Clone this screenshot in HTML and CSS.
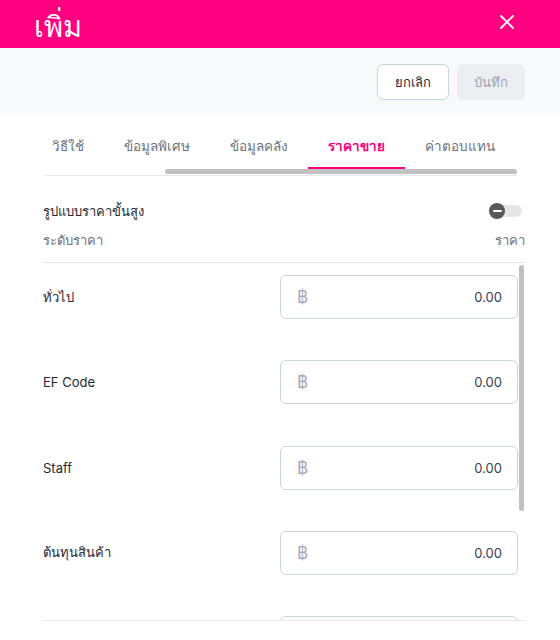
FILE: index.html
```html
<!DOCTYPE html>
<html lang="th">
<head>
<meta charset="utf-8">
<title>เพิ่ม</title>
<link rel="stylesheet" href="styles.css">
</head>
<body>
<div class="modal">
  <header class="header">
    <h1 class="title">เพิ่ม</h1>
    <button class="close" aria-label="close">
      <svg width="14" height="14" viewBox="0 0 14 14"><path d="M1 1 L13 13 M13 1 L1 13" stroke="#fff" stroke-width="1.8" stroke-linecap="round"/></svg>
    </button>
  </header>
  <div class="toolbar">
    <button class="btn btn-cancel">ยกเลิก</button>
    <button class="btn btn-save">บันทึก</button>
  </div>
  <nav class="tabs-wrap">
    <div class="tabs-scroll">
      <div class="tabs">
        <span class="tab">ข้อมูลทั่วไป</span>
        <span class="tab">รูปภาพ</span>
        <span class="tab">วิธีใช้</span>
        <span class="tab">ข้อมูลพิเศษ</span>
        <span class="tab">ข้อมูลคลัง</span>
        <span class="tab active">ราคาขาย</span>
        <span class="tab">ค่าตอบแทน</span>
      </div>
    </div>
    <div class="hscroll"><div class="hthumb"></div></div>
  </nav>
  <section class="content">
    <div class="adv-row">
      <span class="adv-label">รูปแบบราคาขั้นสูง</span>
      <span class="toggle"><span class="knob"></span></span>
    </div>
    <div class="head-row">
      <span>ระดับราคา</span>
      <span>ราคา</span>
    </div>
    <div class="list-area">
      <div class="list">
        <div class="row"><span class="row-label">ทั่วไป</span><div class="price-input"><span class="baht">฿</span><span class="val">0.00</span></div></div>
        <div class="row"><span class="row-label">EF Code</span><div class="price-input"><span class="baht">฿</span><span class="val">0.00</span></div></div>
        <div class="row"><span class="row-label">Staff</span><div class="price-input"><span class="baht">฿</span><span class="val">0.00</span></div></div>
        <div class="row"><span class="row-label">ต้นทุนสินค้า</span><div class="price-input"><span class="baht">฿</span><span class="val">0.00</span></div></div>
        <div class="row"><span class="row-label">ราคาส่ง</span><div class="price-input"><span class="baht">฿</span><span class="val">0.00</span></div></div>
      </div>
      <div class="vscroll"><div class="vthumb"></div></div>
    </div>
  </section>
</div>
</body>
</html>
```

FILE: styles.css
```css
* { box-sizing: border-box; }
html, body { margin: 0; padding: 0; background: #fff; }
body {
  font-family: Inter, Roboto, "Noto Sans", sans-serif;
  color: #1f2937;
  width: 560px;
  height: 640px;
  overflow: hidden;
}
.header {
  height: 48px;
  background: #ff0080;
  display: flex;
  align-items: center;
  justify-content: space-between;
  padding: 0 46px 0 34px;
}
.title {
  margin: 4px 0 0;
  font-size: 29px;
  font-weight: 400;
  color: #fff;
  line-height: 1;
}
.close {
  border: 0;
  background: none;
  padding: 0;
  width: 14px;
  height: 14px;
  display: flex;
  margin-top: -4px;
}
.toolbar {
  height: 65px;
  background: #f8f9fb;
  display: flex;
  justify-content: flex-end;
  align-items: flex-start;
  gap: 8px;
  padding: 16px 35px 0 0;
}
.btn {
  height: 36px;
  border-radius: 6px;
  font-family: inherit;
  font-size: 13px;
  padding: 0;
}
.btn-cancel {
  width: 72px;
  background: #fff;
  border: 1px solid #c9d3e0;
  color: #1f2937;
}
.btn-save {
  width: 68px;
  background: #eceef1;
  border: 1px solid #eceef1;
  color: #9aa3b1;
}
.tabs-wrap {
  margin: 0 43px 0 45px;
}
.tabs-scroll {
  overflow: hidden;
  direction: rtl;
}
.tabs {
  direction: ltr;
  display: flex;
  width: max-content;
  padding-right: 2px;
}
.tab {
  flex: none;
  padding: 23px 20px 11px;
  line-height: 20px;
  font-size: 13.5px;
  font-weight: 500;
  color: #6b7280;
  border-bottom: 2px solid transparent;
  white-space: nowrap;
}
.tab.active {
  color: #ff0080;
  font-weight: 600;
  border-bottom-color: #ff0080;
}
.hscroll {
  height: 7px;
  border-bottom: 1px solid #e5e7eb;
}
.hthumb {
  margin-left: 120px;
  width: 352px;
  height: 5px;
  border-radius: 3px;
  background: #c1c1c1;
}
.content {
  margin: 0 35px 0 43px;
}
.adv-row {
  margin-top: 25px;
  height: 20px;
  display: flex;
  align-items: center;
  justify-content: space-between;
  font-size: 13px;
  color: #1f2937;
}
.toggle {
  width: 33px;
  height: 12px;
  border-radius: 6px;
  background: #e6e6e6;
  display: flex;
  align-items: center;
  margin-right: 3px;
}
.knob {
  width: 16px;
  height: 16px;
  border-radius: 50%;
  background: #595959;
  display: flex;
  align-items: center;
  justify-content: center;
}
.knob::after {
  content: "";
  width: 9px;
  height: 2px;
  background: #fff;
  border-radius: 1px;
}
.head-row {
  margin-top: 9px;
  height: 20px;
  display: flex;
  align-items: center;
  justify-content: space-between;
  font-size: 13px;
  color: #6b7280;
}
.list-area {
  margin-top: 12px;
  border-top: 1px solid #e5e7eb;
  border-bottom: 1px solid #e5e7eb;
  height: 359px;
  display: flex;
  overflow: hidden;
}
.list {
  flex: 1;
  padding-top: 12px;
  display: flex;
  flex-direction: column;
  gap: 41.25px;
}
.row {
  flex: none;
  height: 44px;
  display: flex;
  align-items: center;
  justify-content: space-between;
}
.row-label {
  font-size: 13px;
  color: #1f2937;
}
.price-input {
  width: 238px;
  height: 44px;
  border: 1px solid #cbd5e1;
  border-radius: 6px;
  display: flex;
  align-items: center;
  justify-content: space-between;
  padding: 0 15px 0 16px;
}
.baht {
  font-size: 17px;
  color: #a3acba;
}
.val {
  font-size: 13px;
  color: #374151;
}
.vscroll {
  flex: none;
  width: 7px;
  padding: 2px 1px 0 1px;
}
.vthumb {
  width: 5px;
  height: 246px;
  border-radius: 3px;
  background: #c1c1c1;
}
```
